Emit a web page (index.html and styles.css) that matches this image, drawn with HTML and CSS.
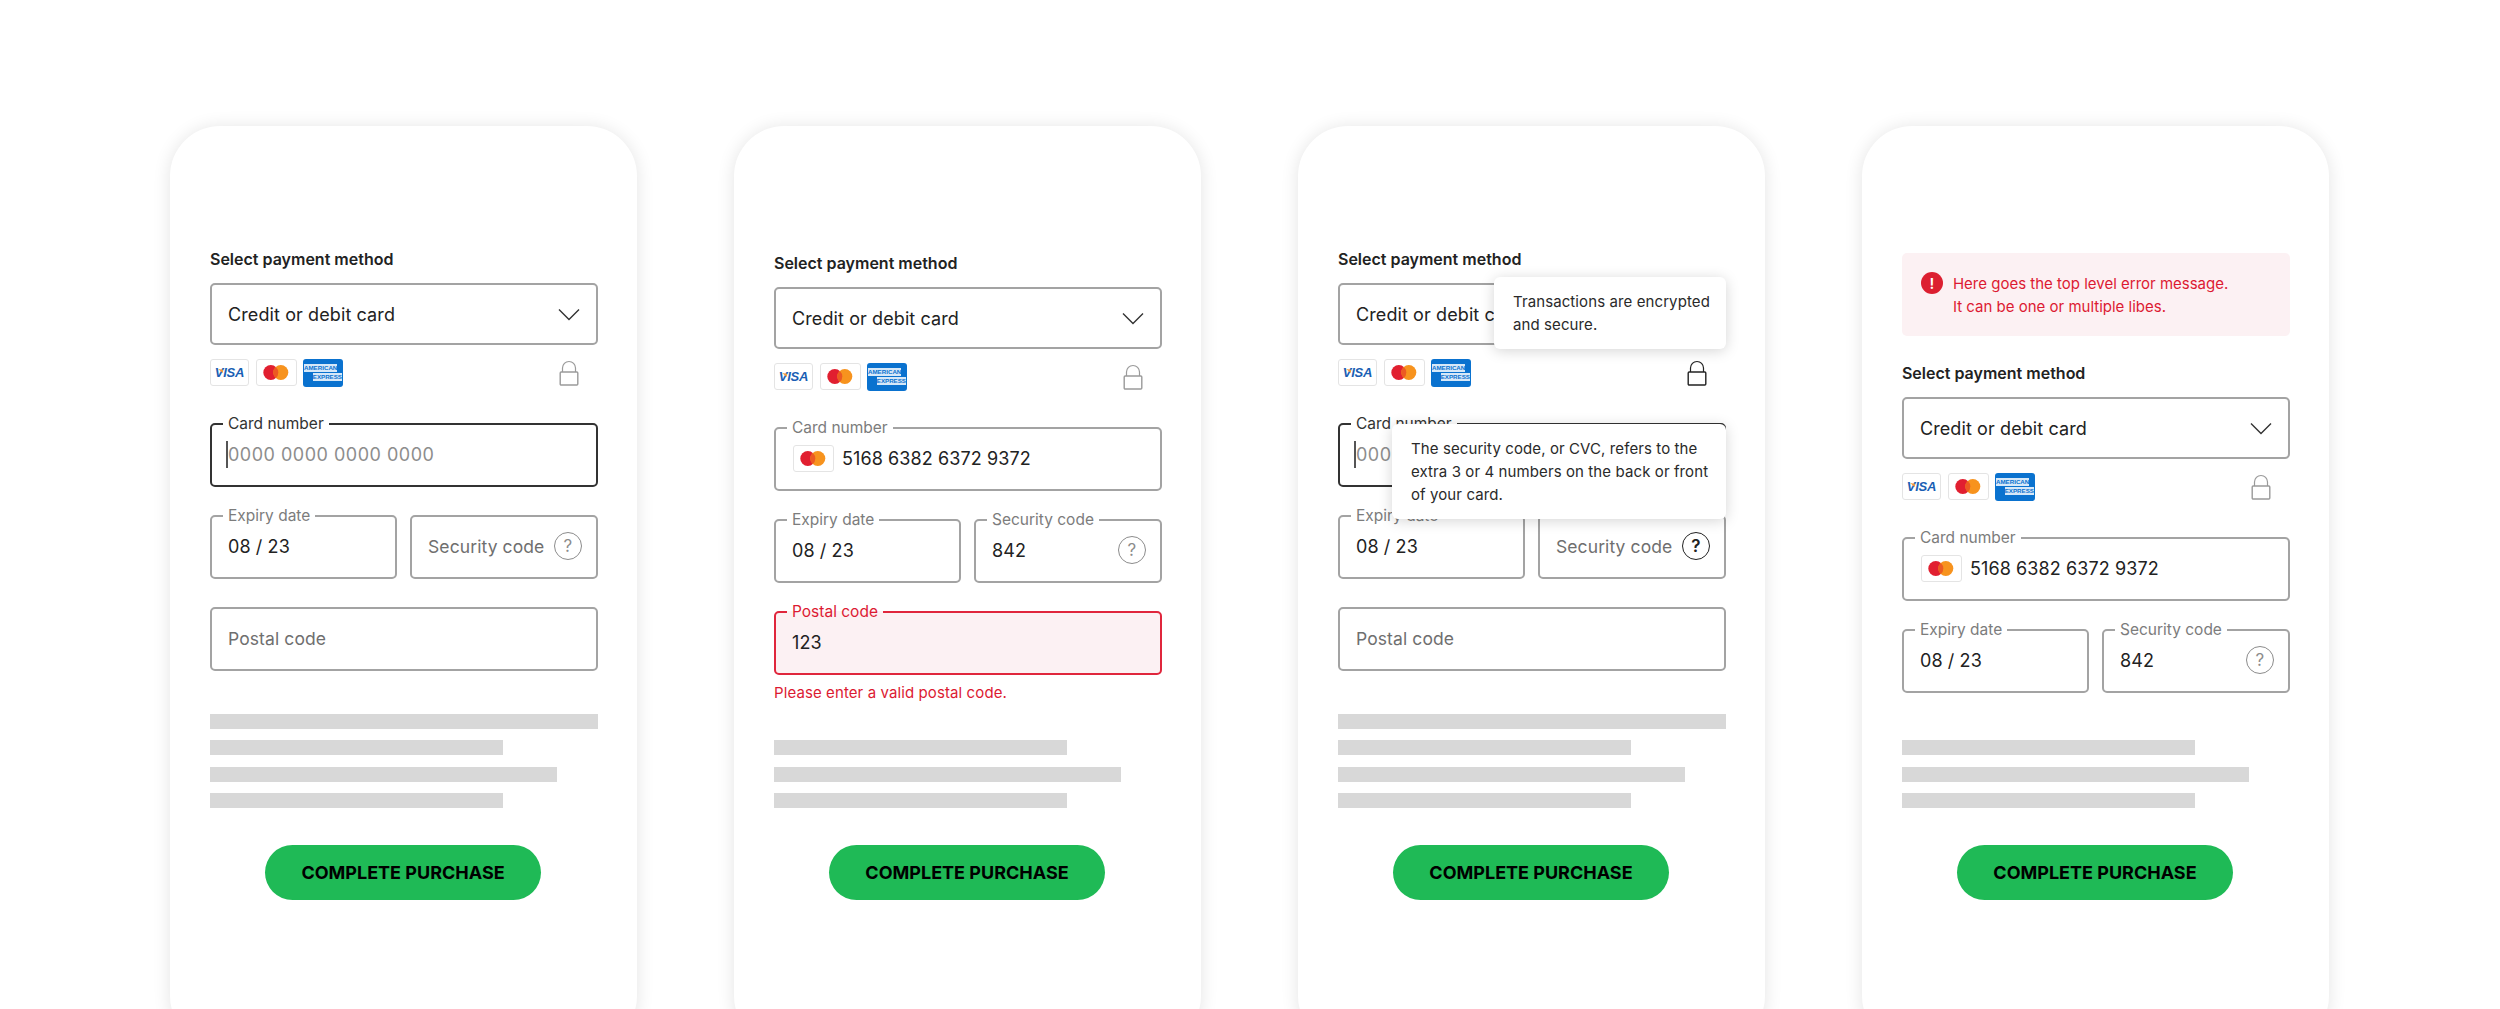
FILE: index.html
```html
<!DOCTYPE html>
<html>
<head>
    <title>Checkout payment states</title>
    <link rel="stylesheet" href="styles.css">
</head>
<body>
    <svg class="defs" aria-hidden="true">
        <symbol id="mc" viewBox="0 0 39 27">
            <circle cx="13.8" cy="13.5" r="7.5" fill="#e11f30"/>
            <circle cx="23.8" cy="13.5" r="7.5" fill="#f7931e"/>
            <path d="M18.8 7.9A7.5 7.5 0 0 1 18.8 19.1A7.5 7.5 0 0 1 18.8 7.9Z" fill="#ec5a22"/>
        </symbol>
        <symbol id="lock" viewBox="0 0 20 26">
            <path d="M3.5 12V8a6.5 6.5 0 0 1 13 0V12" fill="none" stroke="currentColor" stroke-width="1.2"/>
            <rect x="1.2" y="12" width="17.6" height="13" rx="1" fill="none" stroke="currentColor" stroke-width="1.4"/>
        </symbol>
        <symbol id="chevron" viewBox="0 0 22 13">
            <path d="M1 1.5L11 11.5L21 1.5" fill="none" stroke="currentColor" stroke-width="1.4"/>
        </symbol>
    </svg>

    <main class="board">
        <!-- empty, card number focused -->
        <section class="phone">
            <div class="form">
                <h2 class="form-title">Select payment method</h2>
                <div class="select">
                    <span>Credit or debit card</span>
                    <svg class="chevron"><use href="#chevron"/></svg>
                </div>
                <div class="pay-row">
                    <span class="pay-mark visa">VISA</span>
                    <span class="pay-mark"><svg class="mc"><use href="#mc"/></svg></span>
                    <span class="pay-mark amex"><b>AMERICAN</b><b class="amex-low">EXPRESS</b></span>
                    <svg class="lock"><use href="#lock"/></svg>
                </div>
                <fieldset class="field field-focus">
                    <legend>Card number</legend>
                    <span class="caret"></span><span class="placeholder">0000 0000 0000 0000</span>
                </fieldset>
                <div class="field-row">
                    <fieldset class="field">
                        <legend>Expiry date</legend>
                        <span>08 / 23</span>
                    </fieldset>
                    <fieldset class="field field-bare">
                        <span class="hint">Security code</span>
                        <span class="help">?</span>
                    </fieldset>
                </div>
                <fieldset class="field field-bare field-solo">
                    <span class="hint">Postal code</span>
                </fieldset>
            </div>
            <div class="bottom">
                <div class="bars">
                    <div class="bar bar-full"></div>
                    <div class="bar bar-short"></div>
                    <div class="bar bar-mid"></div>
                    <div class="bar bar-short"></div>
                </div>
                <button class="buy">COMPLETE PURCHASE</button>
            </div>
        </section>

        <!-- postal code error -->
        <section class="phone phone-low">
            <div class="form">
                <h2 class="form-title">Select payment method</h2>
                <div class="select">
                    <span>Credit or debit card</span>
                    <svg class="chevron"><use href="#chevron"/></svg>
                </div>
                <div class="pay-row">
                    <span class="pay-mark visa">VISA</span>
                    <span class="pay-mark"><svg class="mc"><use href="#mc"/></svg></span>
                    <span class="pay-mark amex"><b>AMERICAN</b><b class="amex-low">EXPRESS</b></span>
                    <svg class="lock"><use href="#lock"/></svg>
                </div>
                <fieldset class="field">
                    <legend>Card number</legend>
                    <span class="pay-mark pay-mark-in"><svg class="mc"><use href="#mc"/></svg></span>
                    <span>5168 6382 6372 9372</span>
                </fieldset>
                <div class="field-row">
                    <fieldset class="field">
                        <legend>Expiry date</legend>
                        <span>08 / 23</span>
                    </fieldset>
                    <fieldset class="field">
                        <legend>Security code</legend>
                        <span>842</span>
                        <span class="help">?</span>
                    </fieldset>
                </div>
                <fieldset class="field field-error">
                    <legend>Postal code</legend>
                    <span>123</span>
                </fieldset>
                <p class="field-msg">Please enter a valid postal code.</p>
            </div>
            <div class="bottom">
                <div class="bars">
                    <div class="bar bar-short"></div>
                    <div class="bar bar-mid"></div>
                    <div class="bar bar-short"></div>
                </div>
                <button class="buy">COMPLETE PURCHASE</button>
            </div>
        </section>

        <!-- tooltips open -->
        <section class="phone">
            <div class="form">
                <h2 class="form-title">Select payment method</h2>
                <div class="select">
                    <span>Credit or debit card</span>
                    <svg class="chevron"><use href="#chevron"/></svg>
                </div>
                <div class="pay-row">
                    <span class="pay-mark visa">VISA</span>
                    <span class="pay-mark"><svg class="mc"><use href="#mc"/></svg></span>
                    <span class="pay-mark amex"><b>AMERICAN</b><b class="amex-low">EXPRESS</b></span>
                    <svg class="lock lock-on"><use href="#lock"/></svg>
                </div>
                <fieldset class="field field-focus">
                    <legend>Card number</legend>
                    <span class="caret"></span><span class="placeholder">0000 0000 0000 0000</span>
                </fieldset>
                <div class="field-row">
                    <fieldset class="field">
                        <legend>Expiry date</legend>
                        <span>08 / 23</span>
                    </fieldset>
                    <fieldset class="field field-bare">
                        <span class="hint">Security code</span>
                        <span class="help help-on">?</span>
                    </fieldset>
                </div>
                <fieldset class="field field-bare field-solo">
                    <span class="hint">Postal code</span>
                </fieldset>
            </div>
            <div class="tip tip-lock">Transactions are encrypted<br>and secure.</div>
            <div class="tip tip-code">The security code, or CVC, refers to the<br>extra 3 or 4 numbers on the back or front<br>of your card.</div>
            <div class="bottom">
                <div class="bars">
                    <div class="bar bar-full"></div>
                    <div class="bar bar-short"></div>
                    <div class="bar bar-mid"></div>
                    <div class="bar bar-short"></div>
                </div>
                <button class="buy">COMPLETE PURCHASE</button>
            </div>
        </section>

        <!-- top level error -->
        <section class="phone phone-low">
            <div class="form">
                <div class="alert">
                    <span class="alert-icon">!</span>
                    <p>Here goes the top level error message.<br>It can be one or multiple libes.</p>
                </div>
                <h2 class="form-title">Select payment method</h2>
                <div class="select">
                    <span>Credit or debit card</span>
                    <svg class="chevron"><use href="#chevron"/></svg>
                </div>
                <div class="pay-row">
                    <span class="pay-mark visa">VISA</span>
                    <span class="pay-mark"><svg class="mc"><use href="#mc"/></svg></span>
                    <span class="pay-mark amex"><b>AMERICAN</b><b class="amex-low">EXPRESS</b></span>
                    <svg class="lock"><use href="#lock"/></svg>
                </div>
                <fieldset class="field">
                    <legend>Card number</legend>
                    <span class="pay-mark pay-mark-in"><svg class="mc"><use href="#mc"/></svg></span>
                    <span>5168 6382 6372 9372</span>
                </fieldset>
                <div class="field-row">
                    <fieldset class="field">
                        <legend>Expiry date</legend>
                        <span>08 / 23</span>
                    </fieldset>
                    <fieldset class="field">
                        <legend>Security code</legend>
                        <span>842</span>
                        <span class="help">?</span>
                    </fieldset>
                </div>
            </div>
            <div class="bottom">
                <div class="bars">
                    <div class="bar bar-short"></div>
                    <div class="bar bar-mid"></div>
                    <div class="bar bar-short"></div>
                </div>
                <button class="buy">COMPLETE PURCHASE</button>
            </div>
        </section>
    </main>
</body>
</html>
```

FILE: styles.css
```css
* {
    box-sizing: border-box;
}
html, body {
    margin: 0;
    height: 1009px;
    overflow: hidden;
    background: #fff;
}
body {
    font-family: "Inter", "Noto Sans", sans-serif;
    font-size: 18px;
    letter-spacing: 0.1px;
    color: #222;
}
.defs {
    display: none;
}
.board {
    display: flex;
    gap: 97.3px;
    padding: 126px 0 0 170px;
}
.phone {
    position: relative;
    display: flex;
    flex-direction: column;
    flex: 0 0 466.7px;
    height: 920px;
    padding: 123px 38.7px 146px 40px;
    background: #fff;
    border-radius: 50px;
    box-shadow: 0 1px 18px rgba(0, 0, 0, 0.11);
}
.phone-low {
    padding-top: 127px;
}

/* form */
.form-title {
    margin: 0 0 14px;
    font-size: 16px;
    line-height: 20px;
    font-weight: 600;
    letter-spacing: 0;
    color: #222;
}
.select {
    display: flex;
    align-items: center;
    justify-content: space-between;
    height: 62px;
    padding: 0 16px;
    border: 2px solid #a3a3a3;
    border-radius: 5px;
}
.chevron {
    width: 22px;
    height: 13px;
    color: #333;
}
.pay-row {
    display: flex;
    align-items: center;
    gap: 7px;
    height: 27px;
    margin-top: 14px;
    margin-bottom: 28px;
}
.pay-mark {
    position: relative;
    display: flex;
    align-items: center;
    justify-content: center;
    flex: 0 0 39px;
    height: 27px;
    background: #fff;
    border: 1px solid #e4e4e4;
    border-radius: 3px;
}
.pay-mark-in {
    margin-right: 8px;
    margin-left: 1px;
}
.mc {
    display: block;
    flex: none;
    width: 39px;
    height: 27px;
}
.visa {
    font-family: "Liberation Sans", sans-serif;
    font-size: 13px;
    font-weight: 700;
    font-style: italic;
    letter-spacing: -0.2px;
    color: #1a5fb4;
}
.visa::before {
    content: "";
    position: absolute;
    left: 7px;
    top: 9px;
    width: 5px;
    height: 4px;
    background: #f59b3a;
    clip-path: polygon(0 0, 100% 20%, 100% 100%);
}
.amex {
    flex-direction: column;
    align-items: flex-start;
    gap: 1px;
    flex-basis: 40px;
    min-width: 0;
    width: 40px;
    height: 28px;
    margin-left: -1px;
    padding: 0 1px;
    overflow: hidden;
    background: #0a72cf;
    border: 0;
    font-family: "Liberation Sans", sans-serif;
}
.amex b {
    font-size: 6.2px;
    line-height: 8px;
    font-weight: 700;
    letter-spacing: 0;
    color: #0a72cf;
    background: #d6e8f8;
}
.amex-low {
    align-self: flex-end;
}
.lock {
    width: 20px;
    height: 26px;
    margin-left: auto;
    margin-right: 19px;
    color: #9a9a9a;
}
.lock-on {
    color: #222;
}

/* fields */
.field {
    display: flex;
    align-items: center;
    min-width: 0;
    width: 100%;
    height: 73px;
    margin: 0;
    padding: 0 14px 11px 16px;
    border: 2px solid #a3a3a3;
    border-radius: 5px;
}
.field legend {
    margin-left: -5px;
    padding: 0 5px;
    font-size: 15.5px;
    line-height: 20px;
    letter-spacing: 0;
    color: #7c7c7c;
}
.field-bare {
    height: 64px;
    padding-bottom: 2px;
}
.field-solo {
    margin-top: 28px;
}
.field-focus {
    border-color: #333;
}
.field-focus legend {
    color: #333;
}
.field-error {
    margin-top: 19px;
    border-color: #e0263c;
    background: #fcf1f3;
}
.field-error legend {
    color: #dc1a32;
}
.field-msg {
    margin: 8px 0 0;
    font-size: 15px;
    line-height: 20px;
    color: #dc1a32;
}
.field-row {
    display: flex;
    align-items: flex-end;
    gap: 13px;
    margin-top: 19px;
}
.field-row .field {
    flex: 1 1 0;
}
.field-row .field:first-child {
    flex: 0 0 187px;
}
.caret {
    flex: none;
    width: 2px;
    height: 27px;
    margin-left: -2px;
    background: #555;
}
.placeholder {
    color: #8d8d8d;
    letter-spacing: 0.5px;
}
.hint {
    color: #6f6f6f;
    font-size: 17.5px;
}
.help {
    display: flex;
    align-items: center;
    justify-content: center;
    flex: none;
    width: 28px;
    height: 28px;
    margin-left: auto;
    border: 1.5px solid #8c8c8c;
    border-radius: 50%;
    font-size: 17px;
    color: #8c8c8c;
}
.help-on {
    border-color: #222;
    color: #222;
    font-weight: 600;
}

/* alert */
.alert {
    display: flex;
    gap: 10px;
    height: 83px;
    margin-bottom: 27px;
    padding: 19px 18px 19px 19px;
    background: #fcf1f3;
    border-radius: 5px;
}
.alert p {
    margin: 0;
    font-size: 15px;
    line-height: 23px;
    letter-spacing: 0;
    color: #dc1a32;
}
.alert-icon {
    display: flex;
    align-items: center;
    justify-content: center;
    flex: none;
    width: 22px;
    height: 22px;
    background: #dc1f30;
    border-radius: 50%;
    font-size: 15px;
    font-weight: 600;
    color: #fff;
}

/* tooltips */
.tip {
    position: absolute;
    left: 196px;
    top: 151px;
    width: 232px;
    padding: 13px 10px 13px 19px;
    background: #fff;
    border-radius: 6px;
    box-shadow: 0 2px 14px rgba(0, 0, 0, 0.17);
    font-size: 15px;
    line-height: 23px;
    white-space: nowrap;
    color: #2a2a2a;
}
.tip-code {
    left: 94px;
    top: 298px;
    width: 334px;
}

/* bottom */
.bottom {
    margin-top: auto;
}
.bars {
    display: grid;
    row-gap: 11.5px;
}
.bar {
    height: 15px;
    background: #d8d8d8;
}
.bar-full {
    width: 100%;
}
.bar-short {
    width: 293px;
}
.bar-mid {
    width: 347px;
}
.buy {
    display: block;
    width: 276px;
    height: 55px;
    margin: 37px 0 0 55px;
    padding: 0;
    border: none;
    border-radius: 28px;
    background: #1fba56;
    font-family: inherit;
    font-size: 18px;
    font-weight: 700;
    letter-spacing: 0;
    color: #000;
}
```
